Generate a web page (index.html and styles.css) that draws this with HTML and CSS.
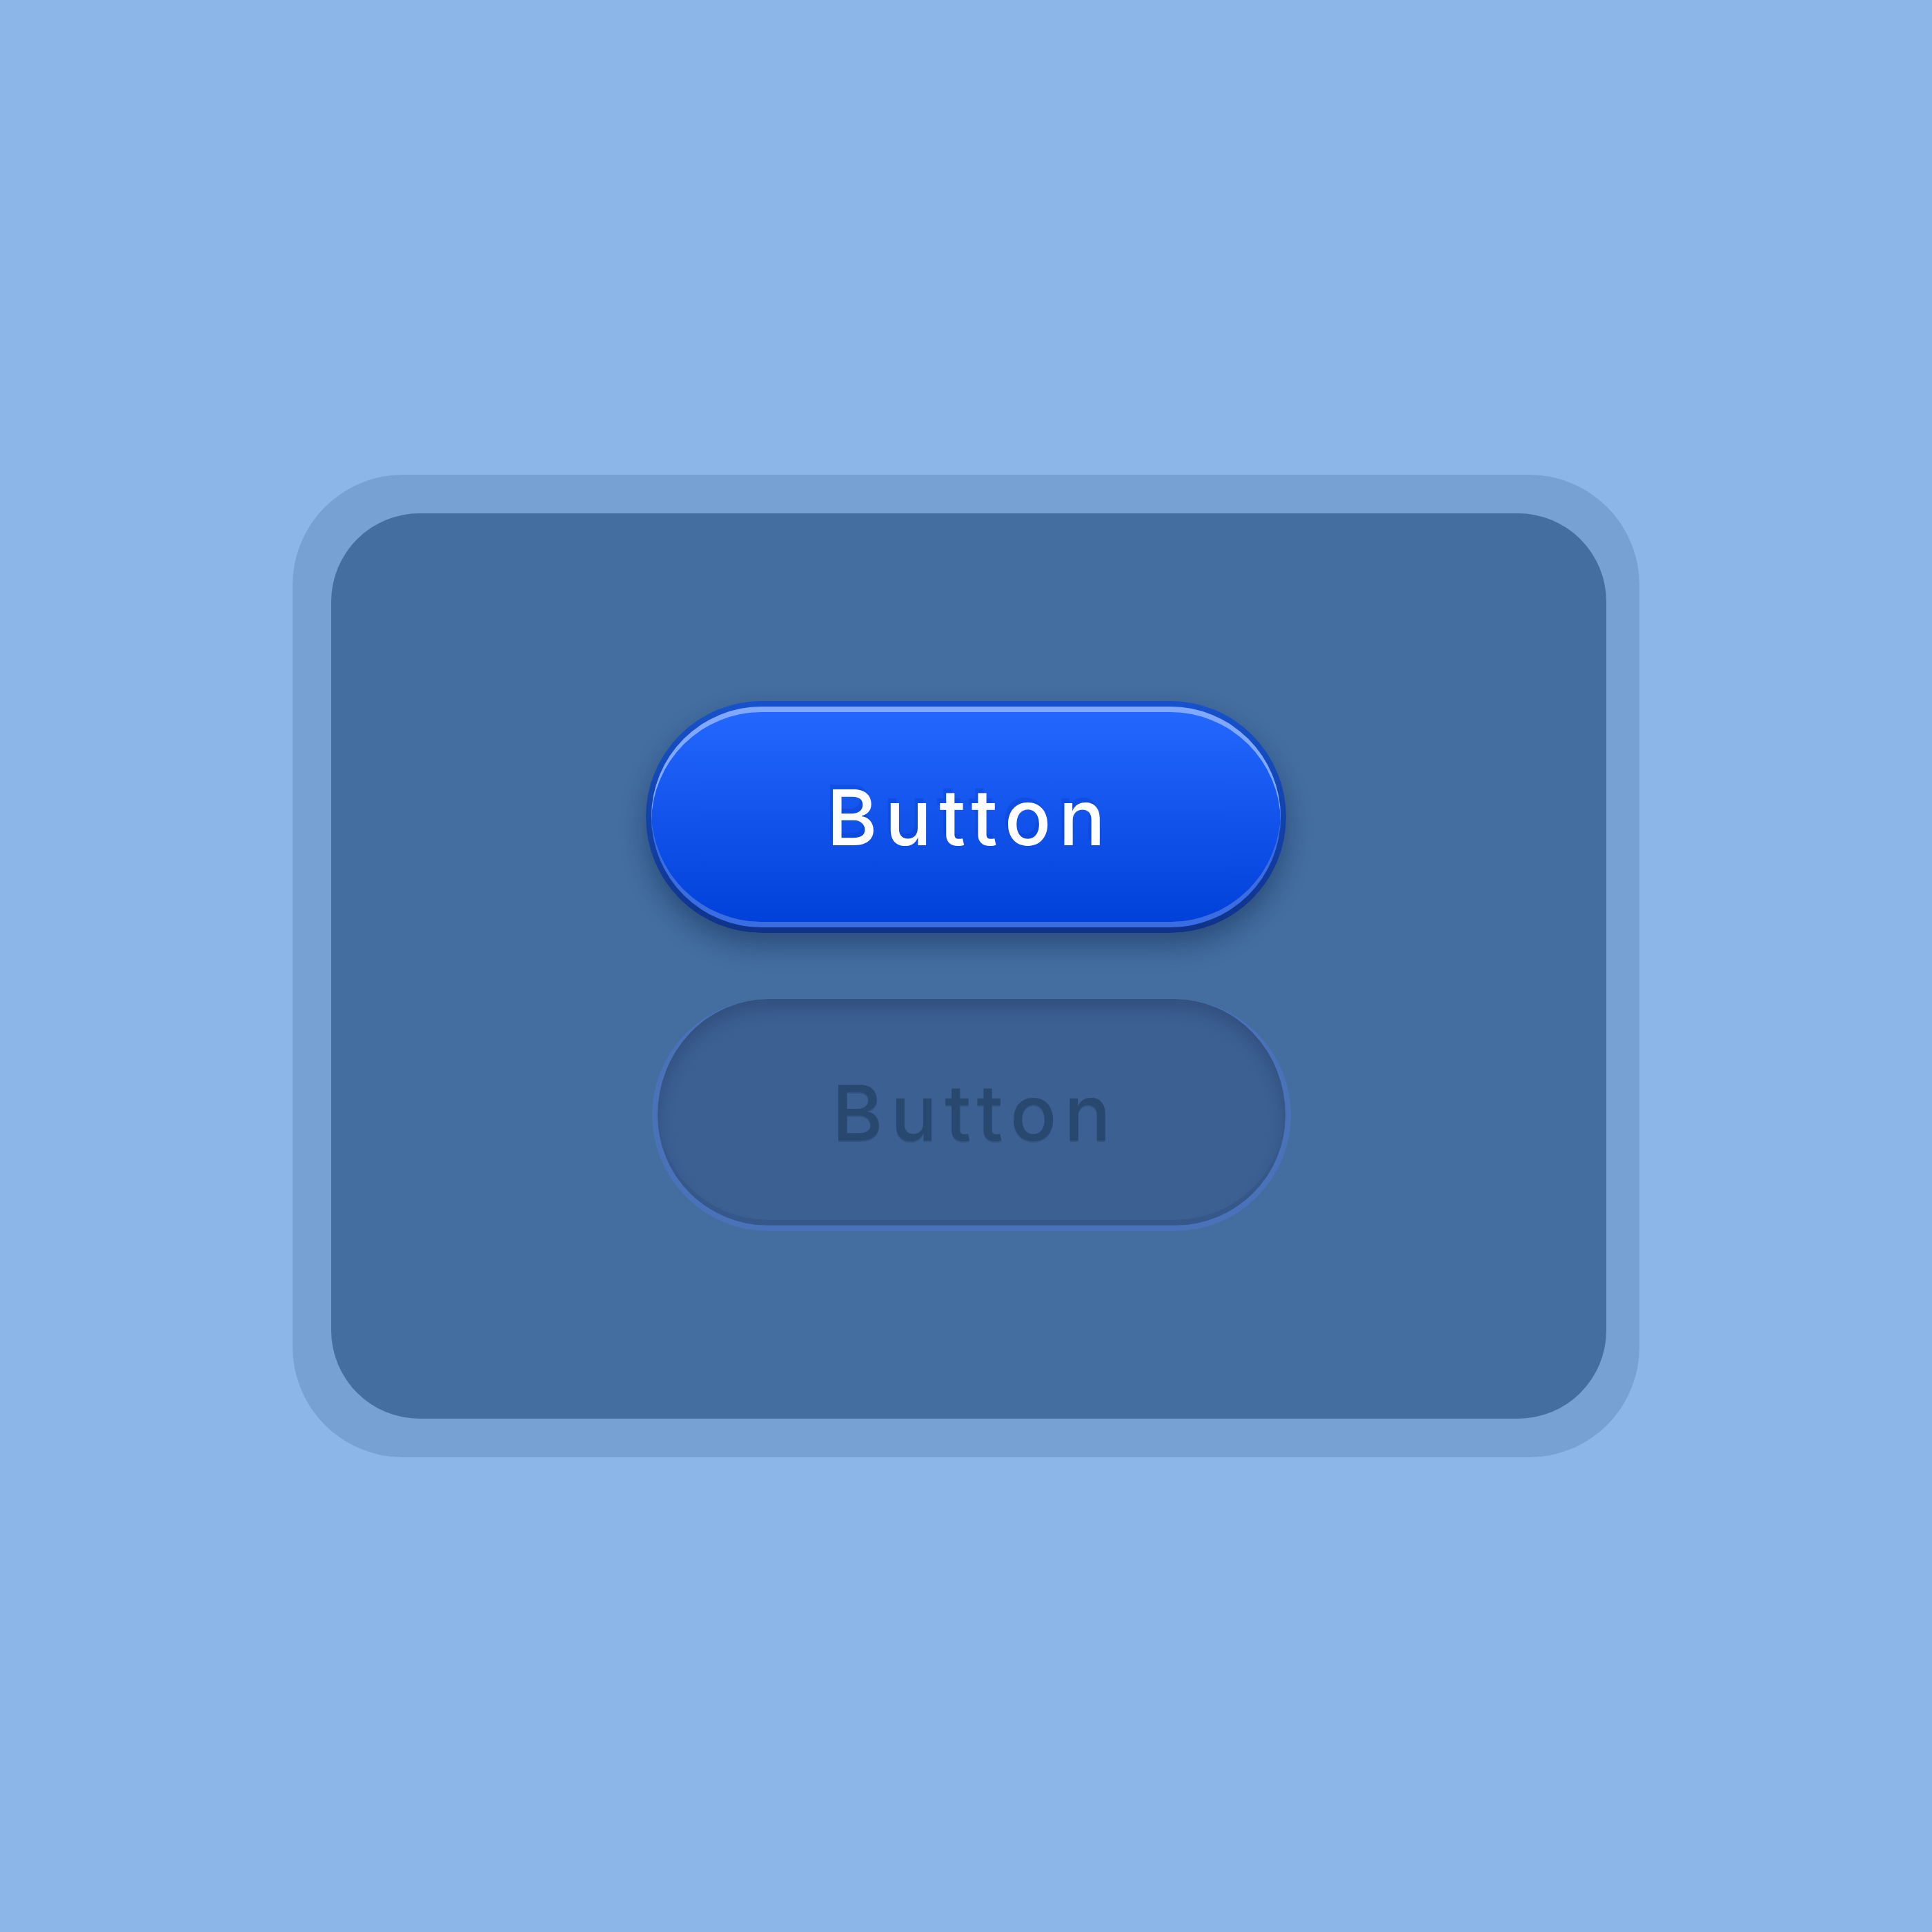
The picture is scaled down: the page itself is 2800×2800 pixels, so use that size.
FILE: index.html
```html
<!DOCTYPE html>
<html lang="en">
<head>
    <meta charset="UTF-8">
    <meta name="viewport" content="width=device-width, initial-scale=1.0">
    <title>Buttons</title>
    <link rel="stylesheet" href="styles.css">
</head>
<body>
    <main class="frame">
        <div class="panel">
            <button class="btn btn-primary" type="button">Button</button>
            <button class="btn btn-pressed" type="button">Button</button>
        </div>
    </main>
</body>
</html>
```

FILE: styles.css
```css
body {
    margin: 0;
    padding: 0;
    width: 2800px;
    height: 2800px;
    background: #8cb6e8;
    font-family: 'Inter', 'Noto Sans', sans-serif;
    display: flex;
    align-items: center;
    justify-content: center;
}

.frame {
    box-sizing: border-box;
    width: 1952px;
    height: 1424px;
    padding: 56px 48px 56px 56px;
    background: #77a1d3;
    border-radius: 160px;
    display: flex;
}

.panel {
    flex: 1;
    background: #436e9f;
    border-radius: 128px;
    display: flex;
    flex-direction: column;
    align-items: center;
    justify-content: center;
    gap: 96px;
}

.btn {
    box-sizing: border-box;
    width: 928px;
    height: 336px;
    border-radius: 168px;
    font-family: inherit;
    font-size: 112px;
    font-weight: 500;
    letter-spacing: 0.1em;
    padding: 0 0 0 0.1em;
    cursor: pointer;
}

/* raised blue pill with a glossy rim */
.btn-primary {
    margin-right: 8px;
    color: #fff;
    border: 8px solid transparent;
    background:
        linear-gradient(#2468ff, #0040d8) padding-box,
        linear-gradient(#1652cc, #0f3388) border-box;
    box-shadow:
        inset 0 8px 0 #80a8ff,
        inset 0 -8px 0 #3a6ee0,
        0 18px 36px rgba(10, 30, 70, 0.4);
    text-shadow: -4px -7px 0 rgba(10, 60, 200, 0.35);
}

/* sunken state, sits flush in the panel */
.btn-pressed {
    width: 926px;
    margin-left: 8px;
    color: #284870;
    background: #3c6092;
    border: 8px solid #4a72b8;
    border-top-width: 0;
    box-shadow:
        inset 0 -8px 0 #36578a,
        inset 0 14px 22px rgba(20, 40, 80, 0.28);
    text-shadow: 0 2px 0 rgba(20, 40, 70, 0.2);
}
```
